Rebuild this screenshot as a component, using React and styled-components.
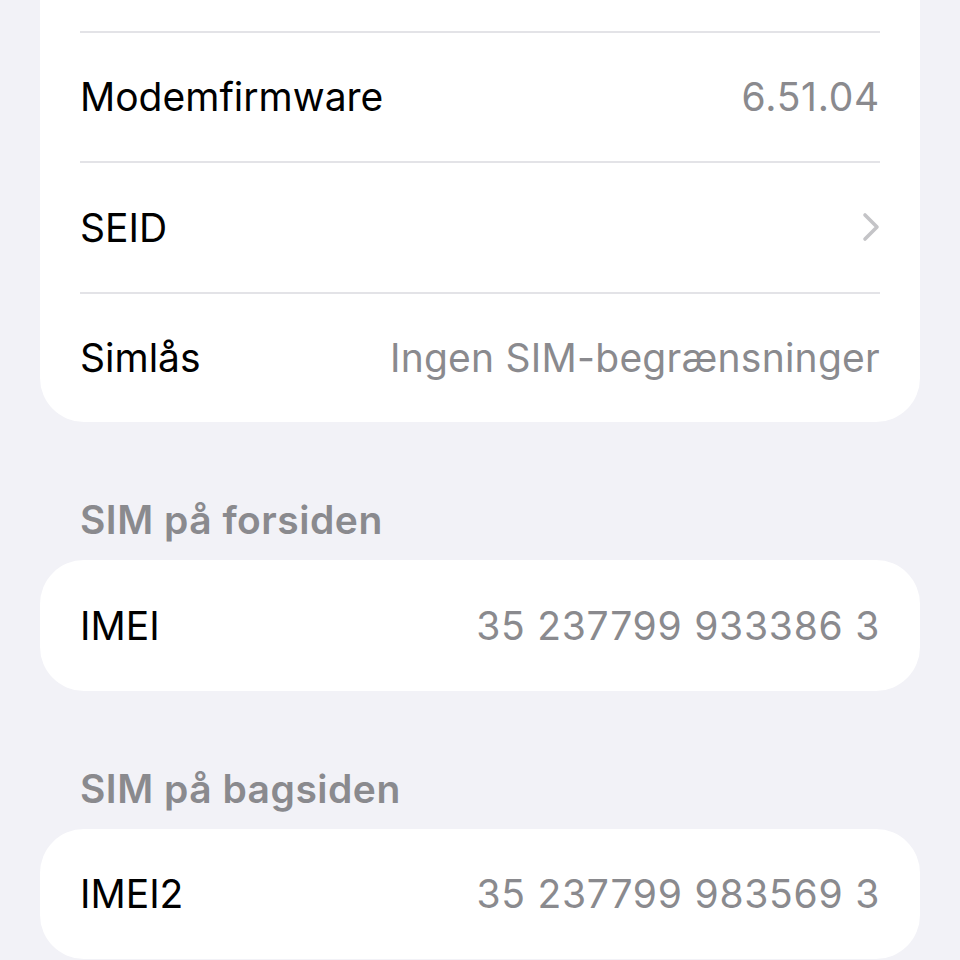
import styled, { createGlobalStyle } from "styled-components";

const GlobalStyle = createGlobalStyle`
  html, body {
    margin: 0;
    padding: 0;
    background: #f2f2f7;
  }
  body {
    font-family: Inter, "Noto Sans", "Liberation Sans", sans-serif;
    -webkit-font-smoothing: antialiased;
  }
`;

const sections = [
  {
    header: null,
    rows: [
      { label: "", value: "" },
      { label: "Modemfirmware", value: "6.51.04", numeric: true },
      { label: "SEID", chevron: true },
      { label: "Simlås", value: "Ingen SIM-begrænsninger" },
    ],
  },
  {
    header: "SIM på forsiden",
    rows: [{ label: "IMEI", value: "35 237799 933386 3", numeric: true }],
  },
  {
    header: "SIM på bagsiden",
    rows: [{ label: "IMEI2", value: "35 237799 983569 3", numeric: true }],
  },
];

const Chevron = () => (
  <svg width="18" height="30" viewBox="0 0 18 30" fill="none">
    <path
      d="M3 3 L15 15 L3 27"
      stroke="#c4c4c7"
      strokeWidth="3.6"
      strokeLinecap="round"
      strokeLinejoin="round"
    />
  </svg>
);

const App = () => (
  <>
    <GlobalStyle />
    <St.Page>
      {sections.map((section, i) => (
        <St.Section key={i} $first={i === 0}>
          {section.header && <St.Header>{section.header}</St.Header>}
          <St.Card>
            {section.rows.map((row, j) => (
              <St.Row key={j}>
                <St.Label>{row.label}</St.Label>
                {row.value && <St.Value $numeric={row.numeric}>{row.value}</St.Value>}
                {row.chevron && <Chevron />}
              </St.Row>
            ))}
          </St.Card>
        </St.Section>
      ))}
    </St.Page>
  </>
);

export default App;

const St = {
  Page: styled.div`
    height: 960px;
    overflow: hidden;
    padding: 0 40px;
    box-sizing: border-box;
  `,
  Section: styled.section`
    margin-top: ${({ $first }) => ($first ? "-100px" : "0")};
  `,
  Header: styled.h2`
    margin: 0;
    height: 138px;
    box-sizing: border-box;
    padding: 78px 40px 0;
    font-size: 39px;
    font-weight: 600;
    line-height: 40px;
    color: #8a8a8e;
    letter-spacing: 0.5px;
  `,
  Card: styled.div`
    background: #ffffff;
    border-radius: 44px;
    overflow: hidden;
  `,
  Row: styled.div`
    display: flex;
    align-items: center;
    justify-content: space-between;
    height: 130.5px;
    margin: 0 40px;
    box-sizing: border-box;

    & + & {
      border-top: 2px solid #e3e3e7;
    }
  `,
  Label: styled.span`
    font-size: 39px;
    color: #000000;
  `,
  Value: styled.span`
    font-size: 39px;
    color: #8a8a8e;
    letter-spacing: ${({ $numeric }) => ($numeric ? "0.75px" : "0.25px")};
  `,
};
